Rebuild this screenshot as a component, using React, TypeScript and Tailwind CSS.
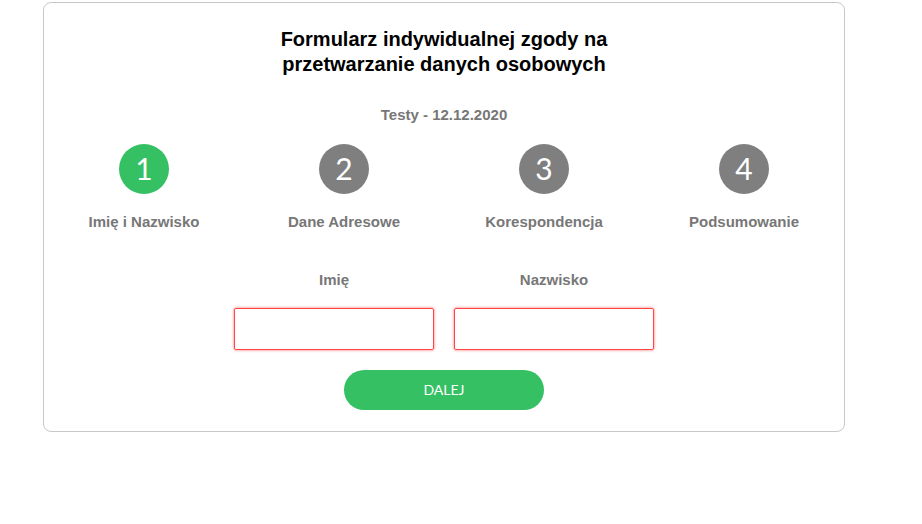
const steps = [
  { n: 1, label: "Imię i Nazwisko", active: true },
  { n: 2, label: "Dane Adresowe", active: false },
  { n: 3, label: "Korespondencja", active: false },
  { n: 4, label: "Podsumowanie", active: false },
];

export default function App() {
  return (
    <div className="min-h-screen bg-white pt-[2px] font-['Liberation_Sans',Arial,sans-serif]">
      <div className="ml-[43px] w-[802px] rounded-lg border border-[#c8c8c8] pb-[21px]">
        <h1 className="pt-[24px] text-center text-[20px] font-bold leading-[25px] text-black">
          Formularz indywidualnej zgody na
          <br />
          przetwarzanie danych osobowych
        </h1>
        <p className="mt-[27px] text-center text-[15px] font-bold text-[#777]">
          Testy - 12.12.2020
        </p>

        <div className="mt-[17px] grid grid-cols-4">
          {steps.map((s) => (
            <div key={s.n} className="flex flex-col items-center">
              <div
                className={
                  "flex h-[50px] w-[50px] items-center justify-center rounded-full font-['Lato',sans-serif] text-[30px] font-normal text-white " +
                  (s.active ? "bg-[#34c063]" : "bg-[#7f7f7f]")
                }
              >
                {s.n}
              </div>
              <div className="mt-[17px] text-[15px] font-bold text-[#777]">
                {s.label}
              </div>
            </div>
          ))}
        </div>

        <div className="mt-[36px] flex justify-center gap-5">
          {["Imię", "Nazwisko"].map((l) => (
            <label key={l} className="flex w-[200px] flex-col items-center">
              <span className="text-[15px] font-bold text-[#777]">{l}</span>
              <input
                type="text"
                className="mt-[16px] h-[42px] w-[200px] rounded-[2px] border border-[#f44] shadow-[0_0_3px_#f66] outline-none"
              />
            </label>
          ))}
        </div>

        <div className="mt-5 flex justify-center">
          <button className="h-10 w-[200px] rounded-full bg-[#34c063] font-['Lato',sans-serif] text-[14px] text-white">
            DALEJ
          </button>
        </div>
      </div>
    </div>
  );
}
